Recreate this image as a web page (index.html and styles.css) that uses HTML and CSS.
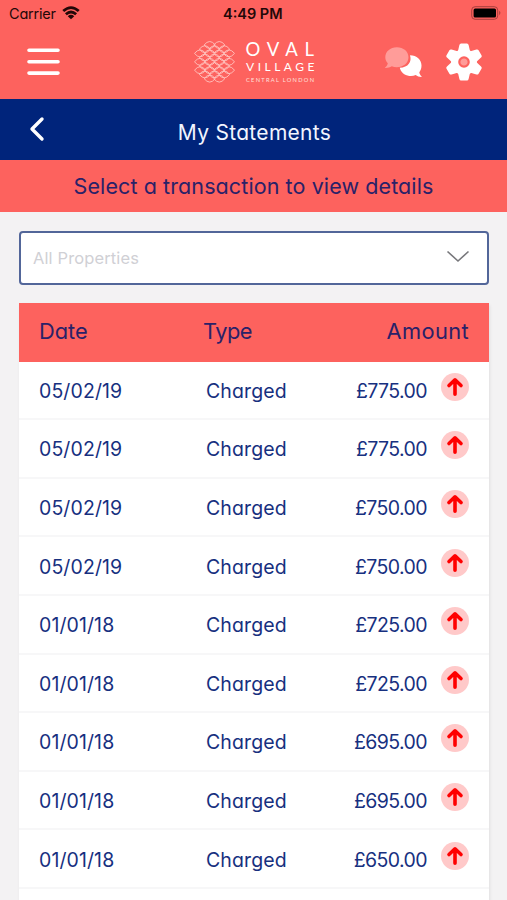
FILE: index.html
```
<!DOCTYPE html>
<html lang="en">
<head>
<meta charset="utf-8">
<title>My Statements</title>
<link rel="stylesheet" href="styles.css">
</head>
<body>
<header class="top">
  <div class="status">
    <span class="carrier">Carrier</span>
    <svg class="wifi" width="18" height="14" viewBox="0 0 19 15"><g fill="none" stroke="#230808" stroke-width="3"><path d="M1.200 5.400Q9.500-2 17.800 5.400M4 8.800Q9.500 4 15 8.800"/></g><path d="M6 10.900Q9.500 8.100 13 10.900L9.500 14.300z" fill="#230808"/></svg>
    <span class="clock">4:49 PM</span>
    <svg class="battery" width="31" height="14" viewBox="0 0 31 14"><rect x=".7" y=".7" width="26" height="12.600" rx="3.400" fill="none" stroke="#a83f3d"/><rect x="2.600" y="2.500" width="22.400" height="9" rx="1.500"/><path d="M28.200 4.800q2.400 2.200 0 4.400z" fill="#a83f3d"/></svg>
  </div>
  <div class="bar">
    <svg class="menu" width="33" height="28" viewBox="0 0 33 28"><path d="M2 2.200H31M2 13.700H31M2 25.100H31" stroke="#fff" stroke-width="3.600" stroke-linecap="round"/></svg>
    <svg class="logo" width="124" height="46" viewBox="194 38 124 46">
      <g id="weave" fill="none" stroke="#ffc4bf" stroke-width=".9"></g>
      <g fill="#fff" font-family="Lato, sans-serif">
        <text x="245.500" y="56" font-size="18.500" textLength="68.500">OVAL</text>
        <text x="246" y="70.500" font-size="12" textLength="68.500">VILLAGE</text>
        <text x="246" y="81.800" font-size="5.700" textLength="68" fill="#ffe0dd">CENTRAL LONDON</text>
      </g>
    </svg>
    <svg class="chat" width="38" height="32" viewBox="384 46 38 32"><path d="M410 55.200c6.800 0 11.500 4.800 11.500 10.200 0 2.700-.8 5-2.200 6.800.3 2 1.300 3.300 2.700 4.800-2.700.1-4.700-.7-6.300-1.900-2 .8-4.300 1.200-6.400.8-5-.7-8.600-3.900-9.500-8.200 8.500-.3 12.300-6 10.200-12.500z" fill="#fff"/><path d="M396.800 47.200c6.700 0 11.700 4.200 11.700 10s-5.200 10-11.700 10c-1.800 0-3.500-.3-5-.9-2 1.300-4.400 1.700-7 1.600 1.700-1.500 2.700-2.900 3-4.700-1.600-1.600-2.500-3.700-2.500-6 0-5.600 4.900-10 11.500-10z" fill="#ff9c99"/></svg>
    <svg class="gear" width="36" height="38" viewBox="-18 -19 36 38"><g fill="#fff"><circle r="13"/><g id="teeth"></g></g><circle r="4.700" fill="#ff9c99" stroke="#fd625e" stroke-width="2.200"/></svg>
  </div>
</header>
<nav class="title">
  <svg class="back" width="16" height="26" viewBox="0 0 16 26"><path d="M13 3L3 13 13 23" fill="none" stroke="#fff" stroke-width="3.400" stroke-linecap="round" stroke-linejoin="round"/></svg>
  <h1>My Statements</h1>
</nav>
<p class="hint">Select a transaction to view details</p>
<main>
  <div class="select"><span>All Properties</span><svg width="24" height="14" viewBox="0 0 24 14"><path d="M1.500 1.500L12 11 22.500 1.500" fill="none" stroke="#77777b" stroke-width="1.600"/></svg></div>
  <section class="table">
    <div class="head"><span>Date</span><span>Type</span><span class="h-amount">Amount</span></div>
    <div id="rows"></div>
  </section>
</main>
<script src="script.js"></script>
</body>
</html>
```
FILE: styles.css
```
* { box-sizing: border-box; }
body { margin: 0; width: 507px; height: 900px; overflow: hidden; background: #f3f2f3; font-family: Inter, sans-serif; font-feature-settings: "cv11"; color: #17307f; }
svg { display: block; flex: none; }
.top { height: 98.500px; background: #fd625e; }
.status { height: 28px; display: grid; grid-template-columns: 53px 170px 1fr 31px; padding: 0 5px 0 9px; align-items: center; color: #230808; }
.carrier { font-size: 14.500px; letter-spacing: -.2px; }
.wifi { margin-top: -3px; }
.carrier, .clock { line-height: 28px; white-space: nowrap; }
.clock { font-size: 14.500px; font-weight: 600; margin-left: -9px; }
.battery { margin-top: -2px; }
.bar { display: flex; align-items: flex-start; padding-left: 27px; }
.menu { margin-top: 20px; }
.logo { margin: 10px 0 0 134px; }
.chat { margin: 18px 0 0 66px; }
.gear { margin: 15px 0 0 24px; }
.title { height: 61px; background: #00247b; display: grid; grid-template-columns: 30px 1fr 30px; align-items: center; padding: 4px 29px 0; color: #f2f5ff; }
.back { margin-top: -5px; }
.title h1 { margin: 3px 0 0 2px; font-size: 21px; font-weight: 400; text-align: center; letter-spacing: .3px; line-height: 26px; white-space: nowrap; }
.hint { height: 52.500px; margin: 0; background: #fd625e; color: #2a2168; font-size: 21.500px; line-height: 53px; text-align: center; letter-spacing: .1px; white-space: nowrap; }
main { padding: 19px 18px 0 19px; }
.select { height: 54px; border: 2px solid #526699; border-radius: 4px; background: #fff; display: flex; align-items: center; justify-content: space-between; padding: 0 17px 3px 12px; color: #d0d0d5; font-size: 16.500px; letter-spacing: .12px; }
.select span { padding-top: 2px; }
.table { margin-top: 18px; background: #fff; box-shadow: 1px 2px 3px rgba(0, 0, 0, .08); height: 640px; }
.head, .row { display: grid; grid-template-columns: 164px 1fr auto; padding: 0 20px; align-items: center; white-space: nowrap; }
.head { height: 58.500px; background: #fd625e; color: #2a2168; font-size: 21.800px; padding-bottom: 2px; }
.head span:nth-child(2) { letter-spacing: -.5px; }
.h-amount { letter-spacing: .4px; }
.row { height: 58.620px; grid-template-columns: 167px 1fr auto 28px; border-bottom: 2px solid #f7f7f8; font-size: 19.500px; padding-top: 2px; }
.date, .type { letter-spacing: .1px; }
.amount { margin-right: 14px; letter-spacing: -.6px; }
.up { margin-top: -8px; }
```
FILE: script.js
```
const data = [
  ["05/02/19", "£775.00"], ["05/02/19", "£775.00"], ["05/02/19", "£750.00"],
  ["05/02/19", "£750.00"], ["01/01/18", "£725.00"], ["01/01/18", "£725.00"],
  ["01/01/18", "£695.00"], ["01/01/18", "£695.00"], ["01/01/18", "£650.00"]
];
document.getElementById("rows").innerHTML = data.map(([date, amount]) => `
  <div class="row"><span class="date">${date}</span><span class="type">Charged</span><span class="amount">${amount}</span>
  <svg class="up" width="28" height="28" viewBox="0 0 28 28"><circle cx="14" cy="14" r="14" fill="#ffc9c9"/><path d="M14 21.200V7.500M8 12.500L14 6.800 20 12.500" fill="none" stroke="#f00" stroke-width="3.600" stroke-linecap="round" stroke-linejoin="round"/></svg></div>`).join("");

// Overlapping lens shapes, fewer per row toward the top and bottom of the disc.
const counts = [2, 3, 4, 3, 4, 3, 4, 3, 2];
let waves = "";
counts.forEach((count, row) => {
  const y = 61.8 + (row - 4) * 4.2;
  for (let i = 0; i < count; i++) {
    const x = 214.5 + (i - (count - 1) / 2) * 9.6;
    waves += `<path d="M${x - 5.6} ${y}Q${x} ${y - 7} ${x + 5.6} ${y}Q${x} ${y + 7} ${x - 5.6} ${y}z"/>`;
  }
});
document.getElementById("weave").innerHTML = waves;

document.getElementById("teeth").innerHTML = [0, 60, 120, 180, 240, 300].map(a =>
  `<path transform="rotate(${a})" d="M-6-11L-4.600-17q.3-1.500 1.700-1.500h5.800q1.400 0 1.700 1.500L6-11z"/>`).join("");
```
